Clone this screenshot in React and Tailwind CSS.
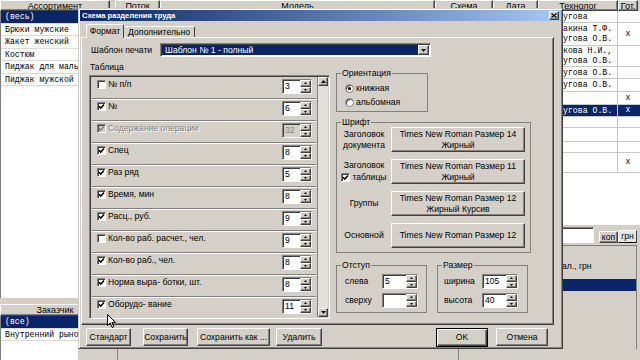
import React from 'react'

const raised =
  'border border-t-white border-l-white border-r-[#404040] border-b-[#404040] shadow-[inset_-1px_-1px_0_#808080]'
const sunken =
  'border border-t-[#808080] border-l-[#808080] border-r-white border-b-white shadow-[inset_1px_1px_0_#404040]'

const tableRows = [
  { label: '№ п/п', on: false, v: 3 },
  { label: '№', on: true, v: 6 },
  { label: 'Содержание операции', on: true, v: 32, off: true },
  { label: 'Спец', on: true, v: 8 },
  { label: 'Раз ряд', on: true, v: 5 },
  { label: 'Время, мин', on: true, v: 8 },
  { label: 'Расц., руб.', on: true, v: 9 },
  { label: 'Кол-во раб. расчет., чел.', on: false, v: 9 },
  { label: 'Кол-во раб., чел.', on: true, v: 8 },
  { label: 'Норма выра- ботки, шт.', on: true, v: 8 },
  { label: 'Оборудо- вание', on: true, v: 11 },
]

const fontRows = [
  { label: ['Заголовок', 'документа'], text: ['Times New Roman Размер 14', 'Жирный'] },
  { label: ['Заголовок', 'таблицы'], check: true, text: ['Times New Roman Размер 11', 'Жирный'] },
  { label: ['Группы'], text: ['Times New Roman Размер 12', 'Жирный Курсив'] },
  { label: ['Основной'], text: ['Times New Roman Размер 12'] },
]

const headCols = [
  ['w-[45px]', 'Поток'],
  ['w-[275px]', 'Модель'],
  ['w-[58px]', 'Схема'],
  ['w-[45px]', 'Дата'],
  ['w-[80px]', 'Технолог'],
  ['w-[20px]', 'Гот.'],
]

const techRows = [
  { h: 'h-[12px]', t: ['угова'] },
  { h: 'h-[23px]', t: ['акина Т.Ф.', 'угова О.В.'], x: true },
  { h: 'h-[21px]', t: ['кова Н.И.,', 'угова О.В.'] },
  { h: 'h-[12px]', t: ['угова О.В.'] },
  { h: 'h-[13px]', t: ['угова О.В.'] },
  { h: 'h-[13px]', t: [], x: true },
  { h: 'h-[12px]', t: ['угова О.В.'], x: true, sel: true },
  { h: 'h-[11px]', t: [] },
  { h: 'h-[14px]', t: [] },
  { h: 'h-[11px]', t: [] },
  { h: 'h-[20px]', t: [], x: true },
]

function Tri({ down, small }) {
  return small ? (
    <svg width="3" height="2" viewBox="0 0 3 2">
      <path d={down ? 'M0 0h3L1.5 2z' : 'M0 2h3L1.5 0z'} fill="#000" />
    </svg>
  ) : (
    <svg width="5" height="3" viewBox="0 0 5 3">
      <path d={down ? 'M0 0h5L2.5 3z' : 'M0 3h5L2.5 0z'} fill="#000" />
    </svg>
  )
}

function Check({ on, off }) {
  return (
    <span
      className={`flex h-[9px] w-[9px] shrink-0 items-center justify-center ${sunken} ${
        off ? 'bg-[#d4d0c8]' : 'bg-white'
      }`}
    >
      {on && (
        <svg width="7" height="7" viewBox="0 0 7 7">
          <path d="M1 3.2l1.8 1.9L6 1.6" fill="none" stroke={off ? '#808080' : '#000'} strokeWidth="1.5" />
        </svg>
      )}
    </span>
  )
}

function Radio({ on }) {
  return (
    <span className="flex h-[9px] w-[9px] shrink-0 items-center justify-center rounded-full border border-[#808080] bg-white shadow-[inset_1px_1px_0_#404040]">
      {on && <span className="h-[3px] w-[3px] rounded-full bg-black" />}
    </span>
  )
}

function Spin({ v, off, wide }) {
  return (
    <div
      className={`flex h-[15px] shrink-0 ${wide ? 'w-[36px]' : 'w-[30px]'} ${sunken} ${
        off ? 'bg-[#d4d0c8] text-[#808080]' : 'bg-white'
      }`}
    >
      <span className="flex-1 pl-[2px] leading-[13px]">{v}</span>
      <div className="flex w-[11px] flex-col">
        <span className={`flex h-[6.5px] items-center justify-center bg-[#d4d0c8] ${raised}`}>
          <Tri small />
        </span>
        <span className={`flex h-[6.5px] items-center justify-center bg-[#d4d0c8] ${raised}`}>
          <Tri small down />
        </span>
      </div>
    </div>
  )
}

function Btn({ className = '', children }) {
  return (
    <button
      type="button"
      className={`flex shrink-0 items-center justify-center bg-[#d4d0c8] text-center leading-[11px] ${raised} ${className}`}
    >
      {children}
    </button>
  )
}

function Group({ title, className = '', children }) {
  return (
    <fieldset className={`shrink-0 border border-[#808080] ${className}`}>
      <legend className="ml-[4px] px-[1px] leading-[10px]">{title}</legend>
      {children}
    </fieldset>
  )
}

function Head({ className = '', children }) {
  return (
    <div
      className={`flex shrink-0 items-center justify-center bg-[#d4d0c8] text-[9px] leading-[10px] ${raised} ${className}`}
    >
      {children}
    </div>
  )
}

function ListRow({ sel, children }) {
  return (
    <div
      className={`h-[12.5px] overflow-hidden whitespace-nowrap border-b border-[#dcdad5] pl-[4px] leading-[12px] ${
        sel ? 'bg-[#0a246a] text-white' : ''
      }`}
    >
      {children}
    </div>
  )
}

function LeftPanel() {
  return (
    <div className="flex w-[110px] shrink-0 flex-col">
      <Head className="h-[11px] w-full">Ассортимент</Head>
      <div className="h-[287px] border-l border-[#808080] bg-white font-['Liberation_Mono',monospace] text-[8.2px]">
        <ListRow sel>(весь)</ListRow>
        <ListRow>Брюки мужские</ListRow>
        <ListRow>Жакет женский</ListRow>
        <ListRow>Костюм</ListRow>
        <ListRow>Пиджак для мальчиков</ListRow>
        <ListRow>Пиджак мужской</ListRow>
      </div>
      <div className="h-[6px]" />
      <Head className="h-[12px] w-full">Заказчик</Head>
      <div className="flex flex-1">
        <div className="w-[78px] overflow-hidden border-l border-[#808080] bg-white font-['Liberation_Mono',monospace] text-[8.2px]">
          <ListRow sel>(все)</ListRow>
          <ListRow>Внутренний рынок</ListRow>
        </div>
      </div>
    </div>
  )
}

function RightPanel() {
  return (
    <div className="flex flex-1 flex-col">
      <div className="flex h-[11px]">
        {headCols.map(([w, t]) => (
          <Head key={t} className={`h-[11px] ${w}`}>
            {t}
          </Head>
        ))}
      </div>
      <div className="h-[214px] overflow-hidden bg-white font-['Liberation_Mono',monospace] text-[8.2px]">
        {techRows.map((r, i) => (
          <div
            key={i}
            className={`flex ${r.h} border-b border-[#c8c8c8] ${r.sel ? 'bg-[#0a246a] text-white' : ''}`}
          >
            <div className="w-[423px] shrink-0" />
            <div className="flex w-[80px] shrink-0 flex-col justify-center border-r border-[#c8c8c8] pl-[25px] leading-[10px]">
              {r.t.map((l) => (
                <span key={l} className="whitespace-nowrap">
                  {l}
                </span>
              ))}
            </div>
            <div className="flex w-[20px] shrink-0 items-center justify-center">{r.x ? 'x' : ''}</div>
          </div>
        ))}
      </div>
      <div className="flex h-[20px] items-end justify-end pb-[2px] pr-[3px]">
        <div className={`h-[16px] w-[113px] bg-white ${sunken}`} />
        <div className={`ml-[5px] flex h-[12px] w-[19px] items-center justify-center bg-[#d4d0c8] ${raised}`}>коп</div>
        <div className="flex h-[13px] w-[19px] items-center justify-center border border-t-white border-l-white border-r-[#404040] bg-[#e8e6e1]">
          грн
        </div>
      </div>
      <div className="mr-[3px] flex h-[104px] flex-col border-r border-t border-[#808080]">
        <div className="mt-[15px] flex justify-end">
          <span className="w-[74px] leading-[11px]">ал., грн</span>
        </div>
        <div className="mt-[7px] h-[12px] bg-[#0a246a]" />
      </div>
      <div className="flex flex-1">
        <div className="ml-[2px] w-[341px] border-l border-[#808080]" />
        <div className="flex-1 border-l border-[#808080]" />
      </div>
    </div>
  )
}

function Dialog() {
  return (
    <div className="absolute left-[78px] top-[8px] z-10 flex h-[341px] w-[485px] flex-col border border-t-[#d4d0c8] border-l-[#d4d0c8] border-r-[#404040] border-b-[#404040] bg-[#d4d0c8] p-[1px] text-[8.6px] shadow-[inset_1px_1px_0_#fff,inset_-1px_-1px_0_#808080]">
      {/* title */}
      <div className="flex h-[11px] shrink-0 items-center bg-linear-to-r from-[#0a246a] to-[#a6caf0] pl-[2px] pr-[2px]">
        <span className="text-[7.6px] font-bold leading-[11px] text-white">Схема разделения труда</span>
        <span className={`ml-auto flex h-[9px] w-[10px] items-center justify-center bg-[#d4d0c8] ${raised}`}>
          <svg width="6" height="5" viewBox="0 0 6 5">
            <path d="M0.5 0.5l5 4M5.5 0.5l-5 4" stroke="#000" strokeWidth="1.2" />
          </svg>
        </span>
      </div>

      {/* tabs */}
      <div className="flex h-[16px] shrink-0 items-end pl-[6px]">
        <div className="relative z-[1] -mb-px flex h-[14px] w-[38px] items-center justify-center rounded-t-[2px] border-l border-r border-t border-l-white border-r-[#404040] border-t-white bg-[#d4d0c8]">
          Формат
        </div>
        <div className="flex h-[11px] w-[71px] items-center justify-center rounded-t-[2px] border-r border-t border-r-[#404040] border-t-white bg-[#d4d0c8]">
          Дополнительно
        </div>
      </div>

      {/* page */}
      <div className={`ml-[1px] flex h-[288px] w-[473px] shrink-0 flex-col ${raised}`}>
        <div className="mt-[5px] flex h-[14px] items-center pl-[9px]">
          <span className="w-[69px] leading-[11px]">Шаблон печати</span>
          <div className={`flex h-[14px] w-[271px] bg-white p-[1px] ${sunken}`}>
            <span className="flex-1 bg-[#0a246a] pl-[3px] leading-[10px] text-white">Шаблон № 1 - полный</span>
            <span className={`flex w-[11px] items-center justify-center bg-[#d4d0c8] ${raised}`}>
              <Tri down />
            </span>
          </div>
        </div>

        <div className="mt-[5px] flex pl-[7px]">
          {/* left column */}
          <div className="flex w-[241px] shrink-0 flex-col">
            <span className="h-[12px] pl-[1px] leading-[11px]">Таблица</span>
            <div className={`mt-[1px] flex h-[244px] p-[1px] ${sunken}`}>
              <div className="w-[226px] overflow-hidden">
                {tableRows.map((r) => (
                  <div
                    key={r.label}
                    className="mx-[1px] flex h-[22px] items-start border-b border-[#808080] pl-[5px] pr-[4px] pt-[2px] shadow-[0_1px_0_#fff]"
                  >
                    <span className="mt-[1px]">
                      <Check on={r.on} off={r.off} />
                    </span>
                    <span
                      className={`ml-[2px] whitespace-nowrap leading-[11px] ${
                        r.off ? 'text-[#808080] [text-shadow:1px_1px_0_#fff]' : ''
                      }`}
                    >
                      {r.label}
                    </span>
                    <span className="ml-auto">
                      <Spin v={r.v} off={r.off} />
                    </span>
                  </div>
                ))}
              </div>
              <div className="flex w-[11px] flex-col justify-between border-l border-[#808080] bg-[#e2e0da]">
                <span className={`flex h-[9px] items-center justify-center bg-[#d4d0c8] ${raised}`}>
                  <Tri />
                </span>
                <span className={`flex h-[9px] items-center justify-center bg-[#d4d0c8] ${raised}`}>
                  <Tri down />
                </span>
              </div>
            </div>
          </div>

          {/* right column */}
          <div className="ml-[6px] flex w-[195px] flex-col">
            <Group title="Ориентация" className="mt-[6px] h-[44px] w-[92px]">
              <div className="flex flex-col gap-[1px] pl-[8px] pt-[4px]">
                <div className="flex h-[13px] items-center gap-[2px]">
                  <Radio on />
                  <span>книжная</span>
                </div>
                <div className="flex h-[13px] items-center gap-[2px]">
                  <Radio />
                  <span>альбомная</span>
                </div>
              </div>
            </Group>

            <Group title="Шрифт" className="mt-[5px] h-[136px] w-[195px]">
              <div className="flex flex-col gap-[7px]">
                {fontRows.map((f) => (
                  <div key={f.text[0] + f.label[0]} className="flex items-center">
                    <div className="flex w-[54px] shrink-0 flex-col items-center leading-[11px]">
                      <span>{f.label[0]}</span>
                      {f.label[1] &&
                        (f.check ? (
                          <span className="mt-[1px] flex items-center gap-[2px]">
                            <Check on />
                            {f.label[1]}
                          </span>
                        ) : (
                          <span>{f.label[1]}</span>
                        ))}
                    </div>
                    <Btn className="h-[25px] w-[134px] flex-col">
                      {f.text.map((t) => (
                        <span key={t}>{t}</span>
                      ))}
                    </Btn>
                  </div>
                ))}
              </div>
            </Group>

            <div className="mt-[7px] flex gap-[10px]">
              <Group title="Отступ" className="h-[53px] w-[91px]">
                <div className="flex flex-col gap-[4px] pl-[8px] pt-[4px]">
                  <div className="flex h-[15px] items-center">
                    <span className="w-[37px]">слева</span>
                    <Spin v={5} wide />
                  </div>
                  <div className="flex h-[15px] items-center">
                    <span className="w-[37px]">сверху</span>
                    <Spin v="" wide />
                  </div>
                </div>
              </Group>
              <Group title="Размер" className="h-[53px] w-[91px]">
                <div className="flex flex-col gap-[4px] pl-[6px] pt-[4px]">
                  <div className="flex h-[15px] items-center">
                    <span className="w-[38px]">ширина</span>
                    <Spin v={105} wide />
                  </div>
                  <div className="flex h-[15px] items-center">
                    <span className="w-[38px]">высота</span>
                    <Spin v={40} wide />
                  </div>
                </div>
              </Group>
            </div>
          </div>
        </div>
      </div>

      {/* buttons */}
      <div className="mt-[3px] flex h-[18px] pl-[6px]">
        <Btn className="h-[18px] w-[45px]">Стандарт</Btn>
        <Btn className="ml-[12px] h-[18px] w-[45px]">Сохранить</Btn>
        <Btn className="ml-[9px] h-[18px] w-[73px]">Сохранить как ...</Btn>
        <Btn className="ml-[6px] h-[18px] w-[46px]">Удалить</Btn>
        <button
          type="button"
          className="ml-[114px] flex h-[19px] w-[52px] items-center justify-center border border-black bg-[#d4d0c8] shadow-[inset_1px_1px_0_#fff,inset_-1px_-1px_0_#404040,inset_-2px_-2px_0_#808080]"
        >
          OK
        </button>
        <Btn className="ml-[8px] h-[18px] w-[52px]">Отмена</Btn>
      </div>
    </div>
  )
}

export default function App() {
  return (
    <div className="relative flex h-[360px] w-[640px] select-none overflow-hidden bg-[#d4d0c8] font-['Liberation_Sans',Arial,sans-serif] text-[8.6px] text-black">
      <LeftPanel />
      <div className="w-[5px] shrink-0" />
      <RightPanel />
      <Dialog />
      <svg className="absolute left-[107px] top-[314px] z-20" width="10" height="15" viewBox="0 0 10 15">
        <path d="M0.5 0.5V11.5L3.2 9L5.2 13.5L6.8 12.8L4.9 8.4H8.5Z" fill="#fff" stroke="#000" strokeWidth="1" />
      </svg>
    </div>
  )
}
